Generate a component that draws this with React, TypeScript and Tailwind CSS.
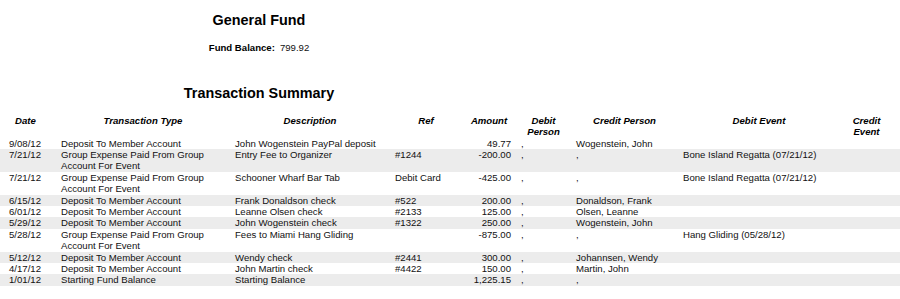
import React from 'react';

interface Txn {
  date: string;
  type: string;
  desc: string;
  ref: string;
  amount: string;
  creditPerson: string;
  debitEvent: string;
}

const txns: Txn[] = [
  { date: '9/08/12', type: 'Deposit To Member Account', desc: 'John Wogenstein PayPal deposit', ref: '', amount: '49.77', creditPerson: 'Wogenstein, John', debitEvent: '' },
  { date: '7/21/12', type: 'Group Expense Paid From Group Account For Event', desc: 'Entry Fee to Organizer', ref: '#1244', amount: '-200.00', creditPerson: ',', debitEvent: 'Bone Island Regatta (07/21/12)' },
  { date: '7/21/12', type: 'Group Expense Paid From Group Account For Event', desc: 'Schooner Wharf Bar Tab', ref: 'Debit Card', amount: '-425.00', creditPerson: ',', debitEvent: 'Bone Island Regatta (07/21/12)' },
  { date: '6/15/12', type: 'Deposit To Member Account', desc: 'Frank Donaldson check', ref: '#522', amount: '200.00', creditPerson: 'Donaldson, Frank', debitEvent: '' },
  { date: '6/01/12', type: 'Deposit To Member Account', desc: 'Leanne Olsen check', ref: '#2133', amount: '125.00', creditPerson: 'Olsen, Leanne', debitEvent: '' },
  { date: '5/29/12', type: 'Deposit To Member Account', desc: 'John Wogenstein check', ref: '#1322', amount: '250.00', creditPerson: 'Wogenstein, John', debitEvent: '' },
  { date: '5/28/12', type: 'Group Expense Paid From Group Account For Event', desc: 'Fees to Miami Hang Gliding', ref: '', amount: '-875.00', creditPerson: ',', debitEvent: 'Hang Gliding (05/28/12)' },
  { date: '5/12/12', type: 'Deposit To Member Account', desc: 'Wendy check', ref: '#2441', amount: '300.00', creditPerson: 'Johannsen, Wendy', debitEvent: '' },
  { date: '4/17/12', type: 'Deposit To Member Account', desc: 'John Martin check', ref: '#4422', amount: '150.00', creditPerson: 'Martin, John', debitEvent: '' },
  { date: '1/01/12', type: 'Starting Fund Balance', desc: 'Starting Balance', ref: '', amount: '1,225.15', creditPerson: ',', debitEvent: '' },
];

const cols = 'grid grid-cols-[42px_164px_150px_62px_44px_45px_97px_152px_43px] gap-x-[10px] pl-[9px]';

const App: React.FC = () => {
  return (
    <div className="min-h-[299px] bg-white pt-[12px] text-[#111] font-['Liberation_Sans',Arial,sans-serif]">
      <h1 className="w-[518px] text-center text-[14.4px] leading-[17px] font-bold text-black">General Fund</h1>
      <p className="mt-[13px] w-[518px] text-center text-[9.6px] leading-[11.4px]">
        <span className="font-bold text-black">Fund Balance:</span>
        <span className="ml-[5px]">799.92</span>
      </p>

      <h2 className="mt-[31.4px] w-[518px] text-center text-[14.4px] leading-[17px] font-bold text-black">Transaction Summary</h2>

      {/* Table header */}
      <div className={`${cols} mt-[13px] items-start text-[9.6px] leading-[11.4px] font-bold italic text-black`}>
        <div className="pl-[6px]">Date</div>
        <div className="text-center">Transaction Type</div>
        <div className="text-center">Description</div>
        <div className="text-center">Ref</div>
        <div className="text-center">Amount</div>
        <div className="text-center">Debit Person</div>
        <div className="text-center">Credit Person</div>
        <div className="text-center">Debit Event</div>
        <div className="text-center">Credit Event</div>
      </div>

      {/* Rows */}
      <div>
        {txns.map((t, i) => (
          <div key={i} className={i % 2 === 1 ? 'bg-[#ececec]' : 'bg-white'}>
            <div className={`${cols} items-start text-[9.6px] leading-[11.4px]`}>
              <div>{t.date}</div>
              <div>{t.type}</div>
              <div>{t.desc}</div>
              <div>{t.ref}</div>
              <div className="text-right">{t.amount}</div>
              <div>,</div>
              <div>{t.creditPerson}</div>
              <div>{t.debitEvent}</div>
              <div></div>
            </div>
          </div>
        ))}
      </div>
    </div>
  );
};

export default App;
